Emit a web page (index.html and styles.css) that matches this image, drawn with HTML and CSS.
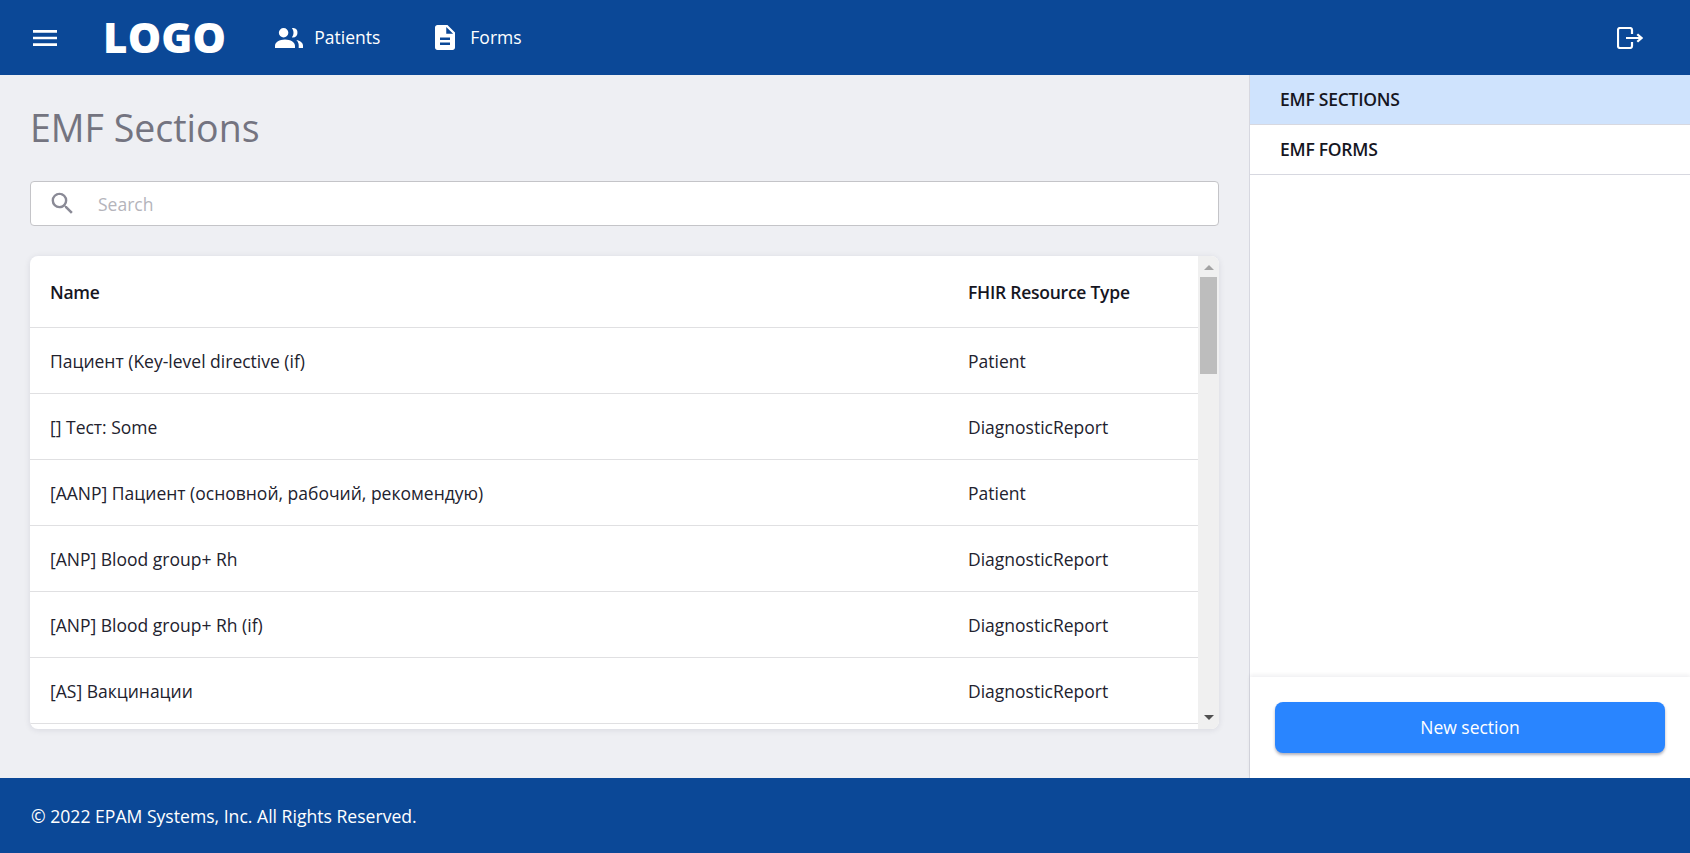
FILE: index.html
```html
<!DOCTYPE html>
<html lang="en">
<head>
<meta charset="utf-8">
<title>EMF Sections</title>
<link rel="stylesheet" href="styles.css">
</head>
<body>
<header class="topbar">
  <button class="menu-btn" aria-label="Menu">
    <svg class="menu-icon" viewBox="0 0 24 16"><path d="M0 0h24v2.670H0zM0 6.670h24v2.670H0zM0 13.330h24V16H0z"/></svg>
  </button>
  <div class="logo">LOGO</div>
  <nav class="nav">
    <a class="nav-item nav-patients">
      <svg class="icon-people" viewBox="0 0 28 20"><path d="M8.600 9.500a4.750 4.750 0 1 0 0-9.500 4.750 4.750 0 0 0 0 9.500zM0 20v-2.300C0 14.300 4.500 11.500 10 11.500s10 2.800 10 6.200V20zM17.800 9.500a4.750 4.750 0 0 0 .6-9.450c-.5 0-1 .1-1.500.25 1 1.200 1.600 2.800 1.600 4.500s-.6 3.300-1.600 4.500c.3.100.6.200.9.200zM21.300 11.900c1.500 1.400 2.400 3.200 2.400 5.400V20H28v-2.500c0-2.900-3-5-6.700-5.600z"/></svg>
      <span>Patients</span>
    </a>
    <a class="nav-item nav-forms">
      <svg class="icon-doc" viewBox="4 2 16 20"><path fill-rule="evenodd" d="M14 2H6c-1.100 0-2 .9-2 2v16c0 1.100.9 2 2 2h12c1.100 0 2-.9 2-2V8l-6-6zm2 16H8v-2h8v2zm0-4H8v-2h8v2zm-3-5V3.500L18.500 9H13z"/></svg>
      <span>Forms</span>
    </a>
  </nav>
  <button class="logout-btn" aria-label="Log out">
    <svg class="icon-logout" viewBox="0 0 26 22"><path d="M15 7V3a2 2 0 0 0-2-2H3a2 2 0 0 0-2 2v16a2 2 0 0 0 2 2h10a2 2 0 0 0 2-2v-4M9 11h14.500M20.300 7.200 24.500 11l-4.200 3.800" fill="none" stroke="#fff" stroke-width="2.200"/></svg>
  </button>
</header>

<div class="body">
  <main class="content">
    <h1 class="title">EMF Sections</h1>
    <div class="search">
      <svg class="icon-search" viewBox="0 0 24 24"><path d="M15.500 14h-.79l-.28-.27A6.470 6.470 0 0 0 16 9.500 6.500 6.500 0 1 0 9.500 16c1.610 0 3.090-.59 4.230-1.570l.27.28v.79l5 4.990L20.490 19l-4.990-5zm-6 0C7.010 14 5 11.990 5 9.500S7.010 5 9.500 5 14 7.010 14 9.500 11.990 14 9.500 14z"/></svg>
      <span class="search-text">Search</span>
    </div>
    <section class="table-card">
      <div class="table-scroll">
        <div class="row head"><div class="col-name">Name</div><div class="col-type">FHIR Resource Type</div></div>
        <div class="row"><div class="col-name">Пациент (Key-level directive (if)</div><div class="col-type">Patient</div></div>
        <div class="row"><div class="col-name">[] Тест: Some</div><div class="col-type">DiagnosticReport</div></div>
        <div class="row"><div class="col-name">[AANP] Пациент (основной, рабочий, рекомендую)</div><div class="col-type">Patient</div></div>
        <div class="row"><div class="col-name">[ANP] Blood group+ Rh</div><div class="col-type">DiagnosticReport</div></div>
        <div class="row"><div class="col-name">[ANP] Blood group+ Rh (if)</div><div class="col-type">DiagnosticReport</div></div>
        <div class="row"><div class="col-name">[AS] Вакцинации</div><div class="col-type">DiagnosticReport</div></div>
      </div>
      <div class="scrollbar">
        <span class="arrow-up"></span>
        <div class="track"><div class="thumb"></div></div>
        <span class="arrow-down"></span>
      </div>
    </section>
  </main>
  <aside class="side">
    <div class="side-list">
      <div class="side-item active">EMF SECTIONS</div>
      <div class="side-item">EMF FORMS</div>
    </div>
    <div class="side-foot">
      <button class="primary">New section</button>
    </div>
  </aside>
</div>

<footer class="footer">© 2022 EPAM Systems, Inc. All Rights Reserved.</footer>
</body>
</html>
```
FILE: styles.css
```css
* { box-sizing: border-box; }
html, body { margin: 0; height: 100%; }
body {
  display: flex;
  flex-direction: column;
  height: 853px;
  overflow: hidden;
  font-family: "Open Sans", "Noto Sans", sans-serif;
  font-size: 17.5px;
  color: #22222e;
  background: #eeeff3;
}
button { font: inherit; border: 0; background: none; padding: 0; }

.topbar {
  flex: 0 0 75px;
  display: flex;
  align-items: center;
  background: #0b4897;
  color: #fff;
  padding-left: 33px;
  padding-right: 47px;
}
.menu-btn { display: flex; }
.menu-icon { width: 24px; height: 16px; fill: #fff; }
.logo {
  margin-left: 46px;
  padding-bottom: 2px;
  font-size: 42px;
  font-weight: 800;
  line-height: 1;
  letter-spacing: 0.2px;
}
.nav { display: flex; align-items: center; margin-left: 49px; }
.nav-item { display: flex; align-items: center; }
.nav-item span { padding-bottom: 2px; }
.nav-patients { margin-right: 55px; }
.icon-people { width: 28px; height: 20px; fill: #fff; margin-right: 11px; }
.icon-doc { width: 20px; height: 25px; fill: #fff; margin-right: 15px; }
.logout-btn { margin-left: auto; display: flex; }
.icon-logout { width: 26px; height: 22px; }

.body { flex: 1 1 auto; display: flex; min-height: 0; }
.content { flex: 1 1 auto; min-width: 0; padding: 28px 30px 0; }
.title {
  margin: 0;
  font-size: 37.5px;
  font-weight: 400;
  line-height: 50px;
  color: #747480;
}
.search {
  margin-top: 28px;
  height: 45px;
  display: flex;
  align-items: center;
  background: #fff;
  border: 1px solid #c4c4c8;
  border-radius: 4px;
  padding-left: 17px;
}
.icon-search { width: 29px; height: 29px; fill: #8a8a96; }
.search-text { margin-left: 21px; color: #b4b4bb; }

.table-card {
  margin-top: 30px;
  height: 473px;
  display: flex;
  background: #fff;
  border-radius: 8px;
  box-shadow: 0 1px 6px rgba(30, 30, 60, 0.1);
  overflow: hidden;
}
.table-scroll { flex: 1 1 auto; min-width: 0; }
.row {
  height: 66px;
  display: flex;
  align-items: center;
  padding-left: 20px;
  border-bottom: 1px solid #e0e0e2;
}
.row.head {
  height: 72px;
  font-weight: 600;
  letter-spacing: -0.25px;
  color: #16161f;
}
.col-name { flex: 0 0 918px; }
.col-type { flex: 1 1 auto; }
.scrollbar {
  flex: 0 0 21px;
  display: flex;
  flex-direction: column;
  align-items: center;
  background: #f0f0f0;
  padding: 9px 0;
}
.arrow-up { border: 5px solid transparent; border-top: 0; border-bottom-color: #a3a3a3; }
.arrow-down { border: 5px solid transparent; border-bottom: 0; border-top-color: #505050; }
.track { flex: 1 1 auto; width: 100%; padding: 7px 2px 0; }
.thumb { height: 97px; background: #bdbdbd; }

.side {
  flex: 0 0 441px;
  display: flex;
  flex-direction: column;
  background: #fff;
  border-left: 1px solid #d7d8e0;
}
.side-list { flex: 1 1 auto; }
.side-item {
  height: 50px;
  display: flex;
  align-items: center;
  padding-left: 30px;
  padding-bottom: 2px;
  font-weight: 600;
  letter-spacing: -0.25px;
  color: #16161f;
  border-bottom: 1px solid #d7d8e0;
}
.side-item.active { background: #cfe3fd; }
.side-foot {
  flex: 0 0 101px;
  padding: 25px 25px 0;
  background: #fff;
  box-shadow: 0 -2px 4px rgba(30, 30, 60, 0.07);
}
.primary {
  display: block;
  width: 100%;
  height: 51px;
  padding-bottom: 2px;
  background: #2985ff;
  color: #fff;
  border-radius: 8px;
  box-shadow: 0 2px 3px rgba(30, 30, 60, 0.35);
}

.footer {
  flex: 0 0 75px;
  display: flex;
  align-items: center;
  padding-left: 31px;
  font-size: 17.6px;
  background: #0b4897;
  color: #fff;
}
```
